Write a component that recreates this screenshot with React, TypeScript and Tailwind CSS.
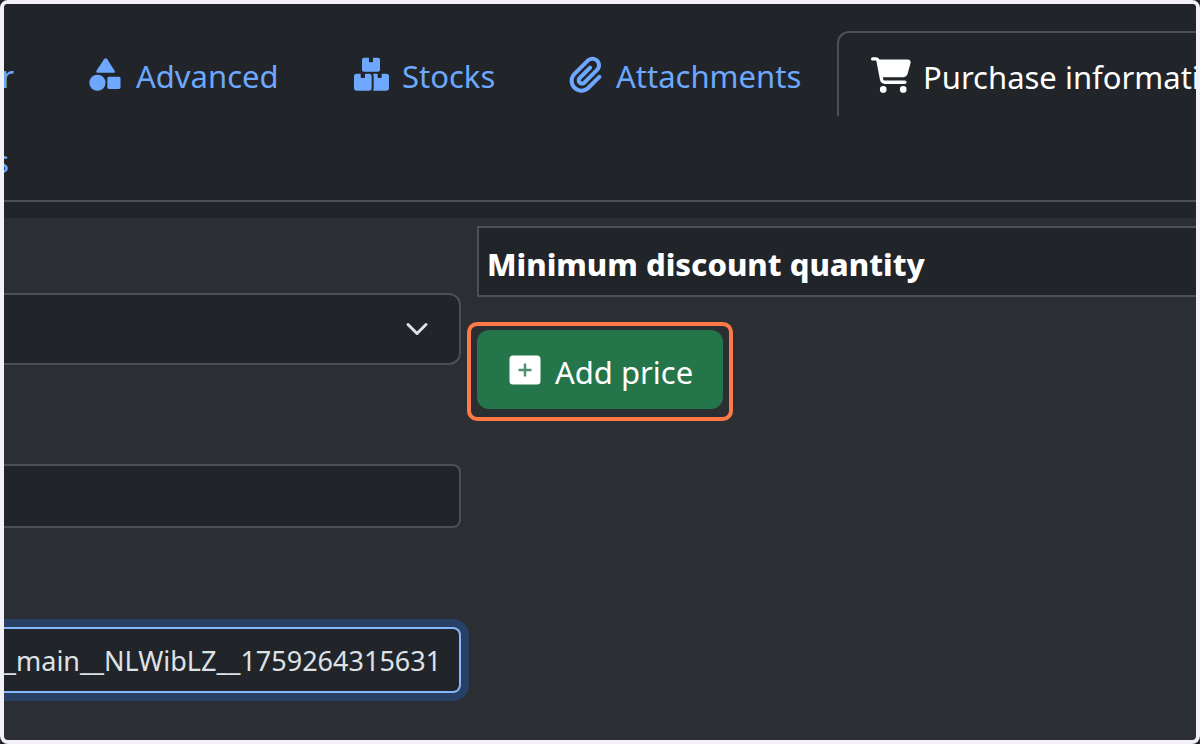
import { useState } from "react";
import type { ReactNode } from "react";
import { FaCartShopping, FaPaperclip } from "react-icons/fa6";

function Tab({ icon, children }: { icon?: ReactNode; children: ReactNode }) {
  return (
    <a href="#" className="flex h-21 shrink-0 items-center gap-3 pt-0.5 text-[#6ea8fe]">
      {icon}
      <span className="pt-1">{children}</span>
    </a>
  );
}

function ShapesIcon() {
  return (
    <svg viewBox="26 26 105 100" className="h-[33px] w-[35px]" fill="currentColor" aria-hidden="true">
      <path d="M71 30q5-6 10 0l22 35q3 6-4 6H52q-6 0-4-6z" />
      <circle cx="51" cy="101" r="24.5" />
      <rect x="81" y="83" width="40" height="37" rx="5" />
    </svg>
  );
}

function BoxesIcon() {
  return (
    <svg viewBox="26 26 108 102" className="h-[34px] w-9" fill="currentColor" aria-hidden="true">
      <path d="M56 28h15v11q0 3 3 3h6q3 0 3-3V28h15q6 0 6 6v30q0 6-6 6H56q-6 0-6-6V34q0-6 6-6z" />
      <path d="M34 76h12v10q0 3 3 3h7q3 0 3-3V76h12q8 0 8 8v35q0 8-8 8H34q-8 0-8-8V84q0-8 8-8z" />
      <path d="M83 76h14v10q0 3 3 3h6q3 0 3-3V76h14q8 0 8 8v35q0 8-8 8H83q2-3 2-8V84q0-5-2-8z" />
    </svg>
  );
}

function SquarePlusIcon() {
  return (
    <svg viewBox="0 0 32 30" className="h-[30px] w-8" aria-hidden="true">
      <rect x="0.5" y="0.5" width="31" height="29" rx="3.5" fill="#fff" />
      <path d="M16 8.5v13M9.5 15h13" stroke="#25754a" strokeWidth="2.5" opacity="0.8" />
    </svg>
  );
}

export default function App() {
  const [code, setCode] = useState("_main__NLWibLZ__1759264315631");
  const [name, setName] = useState("");

  return (
    <div className="bg-[#212529] font-['Noto_Sans','Open_Sans',sans-serif]">
      <div className="flex min-h-screen flex-col overflow-hidden rounded-lg border-4 border-[#f3f0f7] bg-[#2b2f33]">
        <header className="bg-[#212529] pb-4 text-[31px] leading-10">
          <nav aria-label="Part sections" className="border-b-2 border-[#495057] pt-[27px]">
            <div className="flex overflow-hidden">
              <div className="mr-[75px] flex w-[10px] shrink-0 justify-end">
                <Tab>r</Tab>
              </div>
              <div className="w-[265px] shrink-0">
                <Tab icon={<ShapesIcon />}>Advanced</Tab>
              </div>
              <div className="w-[213px] shrink-0">
                <Tab icon={<BoxesIcon />}>Stocks</Tab>
              </div>
              <div className="w-[270px] shrink-0">
                <Tab icon={<FaPaperclip className="size-[37px]" />}>Attachments</Tab>
              </div>
              <a
                href="#"
                aria-current="page"
                className="flex h-[85px] min-w-0 flex-1 items-center gap-3 rounded-tl-xl border-t-2 border-l-2 border-[#495057] pl-8 whitespace-nowrap text-white"
              >
                <FaCartShopping className="h-9 w-10 shrink-0" />
                <span className="pt-1">Purchase information</span>
              </a>
            </div>
            <div className="flex w-[5px] justify-end">
              <Tab>s</Tab>
            </div>
          </nav>
        </header>

        <main className="grid grow grid-cols-[457px_minmax(0,1fr)] gap-4 overflow-hidden">
          <form className="flex flex-col pt-[75px]">
            <div className="grid items-center">
              <select
                aria-label="Supplier"
                className="col-start-1 row-start-1 h-[72px] w-full appearance-none rounded-r-xl border-2 border-l-0 border-[#495057] bg-[#212529] text-[#dee2e6]"
              />
              <svg
                viewBox="0 0 16 16"
                className="pointer-events-none col-start-1 row-start-1 mr-8 size-6 justify-self-end"
                fill="none"
                stroke="#dee2e6"
                strokeWidth="2"
                strokeLinecap="round"
                strokeLinejoin="round"
                aria-hidden="true"
              >
                <path d="m2 5 6 6 6-6" />
              </svg>
            </div>
            <input
              aria-label="Order number"
              value={name}
              onChange={(e) => setName(e.target.value)}
              className="mt-[99px] h-16 rounded-r-lg border-2 border-l-0 border-[#495057] bg-[#212529] px-5 text-[27px] text-[#dee2e6]"
            />
            <input
              aria-label="Internal code"
              value={code}
              onChange={(e) => setCode(e.target.value)}
              className="mt-[99px] h-[66px] rounded-r-lg border-2 border-l-0 border-[#86b7fe] bg-[#212529] pr-[18px] text-right text-[27px] text-[#dee2e6] ring-8 ring-[#284065] outline-none"
            />
          </form>

          <section className="flex flex-col items-start pt-2">
            <table className="w-full border-2 border-r-0 border-[#495057] bg-[#212529]">
              <thead>
                <tr>
                  <th scope="col" className="h-[69px] px-2 pt-1 text-left text-[31px] leading-10 font-extrabold text-white">
                    Minimum discount quantity
                  </th>
                </tr>
              </thead>
            </table>
            <div className="mt-[25px] -ml-[10px] rounded-[10px] border-4 border-[#ff7847] px-[6px] pt-1 pb-2">
              <button
                type="button"
                className="flex h-[79px] items-center gap-3.5 rounded-xl bg-[#25754a] pr-[30px] pl-8 text-[31px] leading-10 text-white"
              >
                <SquarePlusIcon />
                <span className="pt-1">Add price</span>
              </button>
            </div>
          </section>
        </main>
      </div>
    </div>
  );
}
